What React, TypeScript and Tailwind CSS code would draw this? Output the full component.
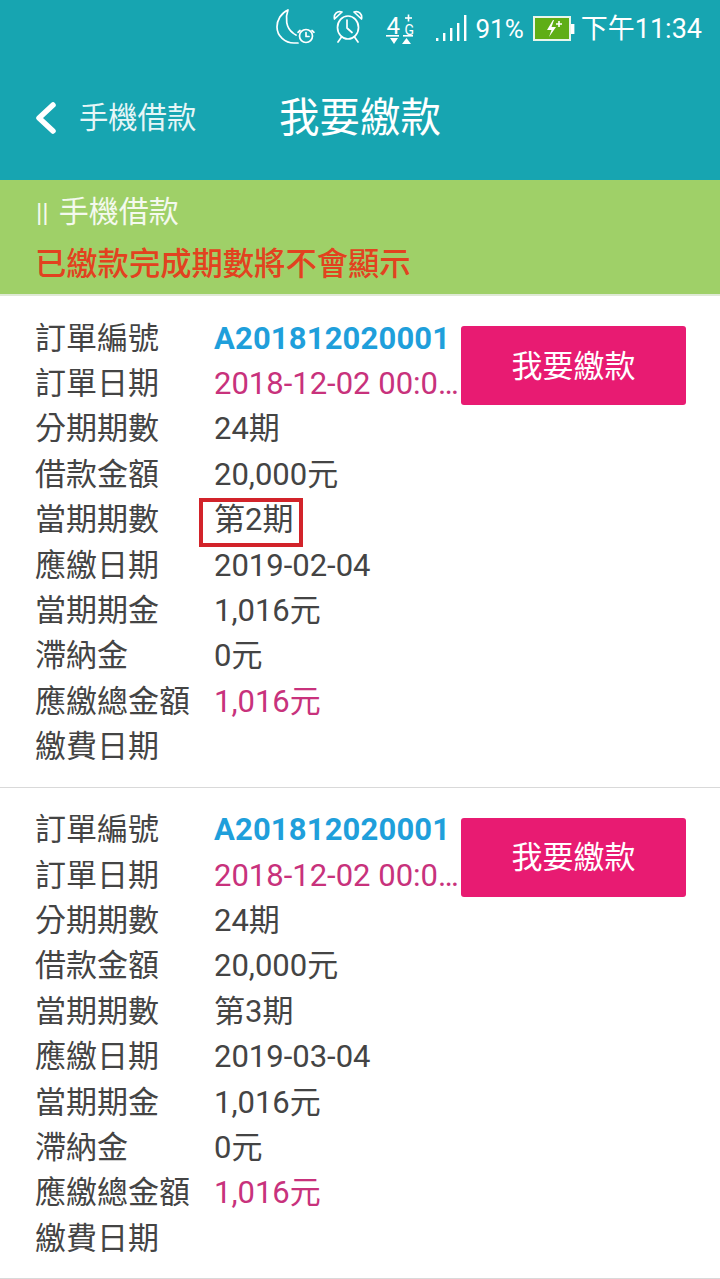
const font = "font-['Roboto','Noto_Sans_CJK_TC',sans-serif]";

type Order = { period: string; due: string; boxed?: boolean };

const orders: Order[] = [
  { period: '第2期', due: '2019-02-04', boxed: true },
  { period: '第3期', due: '2019-03-04' },
];

function MoonAlarmIcon() {
  return (
    <svg width="42" height="38" viewBox="0 0 42 38" fill="none" stroke="#fff" strokeWidth="1.7" strokeLinecap="round" strokeLinejoin="round">
      <path d="M13 2C6 5 2 12 2 19C2 28 10 35 19 35H23M13 2C10 10 11 20 18 25C19 26 20 26.5 21 27" />
      <circle cx="31" cy="28" r="6.5" />
      <path d="M31 24.5V28.5H34M25 22.5l-2 1.8M37 22.5l2 1.8" />
    </svg>
  );
}

function AlarmIcon() {
  return (
    <svg width="30" height="33" viewBox="0 0 30 33" fill="none" stroke="#fff" strokeWidth="1.7" strokeLinecap="round" strokeLinejoin="round">
      <ellipse cx="15" cy="17.5" rx="10.5" ry="11.5" />
      <path d="M14 10V18L19 22.5M5 32l3.5-5M25 32l-3.5-5" />
      <path d="M1.5 9C0.5 4 4 0.5 9 2ZM28.5 9C29.5 4 26 0.5 21 2Z" />
    </svg>
  );
}

function NetworkIcon() {
  return (
    <svg width="30" height="34" viewBox="0 0 30 34" fill="#fff">
      <polygon points="5,25 13,25 9,31" />
      <polygon points="17,31 26,31 21.5,25" />
      <rect x="1" y="22" width="13" height="1.6" />
      <rect x="18" y="22" width="10" height="1.6" />
      <rect x="20" y="4.2" width="7" height="1.6" />
      <rect x="22.7" y="1.5" width="1.6" height="7" />
    </svg>
  );
}

function SignalIcon() {
  return (
    <svg width="32" height="30" viewBox="0 0 32 30" fill="#fff">
      <rect x="1" y="24" width="2.4" height="3" />
      <rect x="8" y="19" width="2.4" height="8" />
      <rect x="15" y="14" width="2.4" height="13" />
      <rect x="22" y="9" width="2.4" height="18" />
      <rect x="29" y="1" width="2.4" height="26" />
    </svg>
  );
}

function BatteryIcon() {
  return (
    <svg width="42" height="28" viewBox="0 0 42 28">
      <rect x="1" y="2" width="36" height="23" fill="#5fae16" stroke="#e8f6ea" strokeWidth="2" />
      <rect x="38" y="9" width="3.4" height="10" fill="#fff" />
      <path d="M20 5L14 15H18.5L16 22L23 12H18.5L21 5Z" fill="#fff" />
      <path d="M26 6V12M23 9H29" stroke="#fff" strokeWidth="1.6" />
    </svg>
  );
}

function StatusBar() {
  return (
    <div className="flex h-[58px] items-center justify-end pr-[18px] text-white">
      <div className="mt-[-4px]"><MoonAlarmIcon /></div>
      <div className="ml-[16px] mt-[-6px]"><AlarmIcon /></div>
      <div className="relative ml-[22px] mt-[2px] h-[34px] w-[30px]">
        <NetworkIcon />
        <span className="absolute left-[1px] top-[1px] text-[24px] leading-[24px]">4</span>
        <span className="absolute left-[19px] top-[11px] text-[14px] leading-[12px]">G</span>
      </div>
      <div className="ml-[20px]"><SignalIcon /></div>
      <span className="ml-[8px] text-[26px] leading-[30px]">91%</span>
      <div className="ml-[9px]"><BatteryIcon /></div>
      <span className="ml-[6px] text-[27px] leading-[30px]">下午11:34</span>
    </div>
  );
}

function Row({ label, value, cls }: { label: string; value: React.ReactNode; cls?: string }) {
  return (
    <div className="flex h-[45.4px] items-center">
      <span className="w-[179px] shrink-0 whitespace-nowrap text-[31px] leading-[40px] text-[#444444]">{label}</span>
      <span className={`whitespace-nowrap text-[31px] leading-[40px] ${cls ?? 'text-[#444444]'}`}>{value}</span>
    </div>
  );
}

function OrderCard({ order }: { order: Order }) {
  return (
    <div className="flex h-[491.5px] items-start border-b border-[#d9d9d9] pl-[35px] pt-[20px]">
      <div className="w-[425px] shrink-0">
        <Row label="訂單編號" value="A201812020001" cls="font-bold tracking-[0.15px] text-[#1f9fdb]" />
        <Row label="訂單日期" value="2018-12-02 00:0…" cls="text-[#c8327c]" />
        <Row label="分期期數" value="24期" />
        <Row label="借款金額" value="20,000元" />
        <div className="relative">
          <Row label="當期期數" value={order.period} />
          {order.boxed && (
            <div className="absolute left-[164px] top-0 h-[49px] w-[104px] border-[4px] border-[#d2232a]" />
          )}
        </div>
        <Row label="應繳日期" value={order.due} />
        <Row label="當期期金" value="1,016元" />
        <Row label="滯納金" value="0元" />
        <Row label="應繳總金額" value="1,016元" cls="text-[#c8327c]" />
        <Row label="繳費日期" value="" />
      </div>
      <button className="ml-[1px] mt-[10px] h-[79px] w-[225px] rounded-[3px] bg-[#e81b72] pt-[3px] text-[31px] text-white">
        我要繳款
      </button>
    </div>
  );
}

export default function App() {
  return (
    <div className={`h-[1279px] w-[720px] overflow-hidden bg-white ${font}`}>
      <div className="h-[180px] bg-[#17a5b1]">
        <StatusBar />
        <div className="flex h-[122px] items-center pb-[2px] text-white">
          <svg className="ml-[34px]" width="24" height="34" viewBox="0 0 24 34" fill="none" stroke="#fff" strokeWidth="5.5" strokeLinecap="round" strokeLinejoin="round">
            <path d="M19 4L5 17L19 30" />
          </svg>
          <span className="ml-[21px] w-[200px] text-[29.3px] leading-[40px] text-[#e6f6f7]">手機借款</span>
          <h1 className="text-[40.5px] font-normal leading-[50px]">我要繳款</h1>
        </div>
      </div>
      <div className="h-[116px] border-b-2 border-[#dfe9d6] bg-[#9fd068] pl-[35px] pt-[12px]">
        <div className="pl-[1px] text-[30px] leading-[40px] text-[#f4f9ee]">
          <span className="mr-[10px] text-[26px]">||</span>手機借款
        </div>
        <div className="mt-[12px] text-[31.3px] font-medium leading-[40px] text-[#e2421f]">已繳款完成期數將不會顯示</div>
      </div>
      {orders.map((o) => (
        <OrderCard key={o.period} order={o} />
      ))}
    </div>
  );
}
